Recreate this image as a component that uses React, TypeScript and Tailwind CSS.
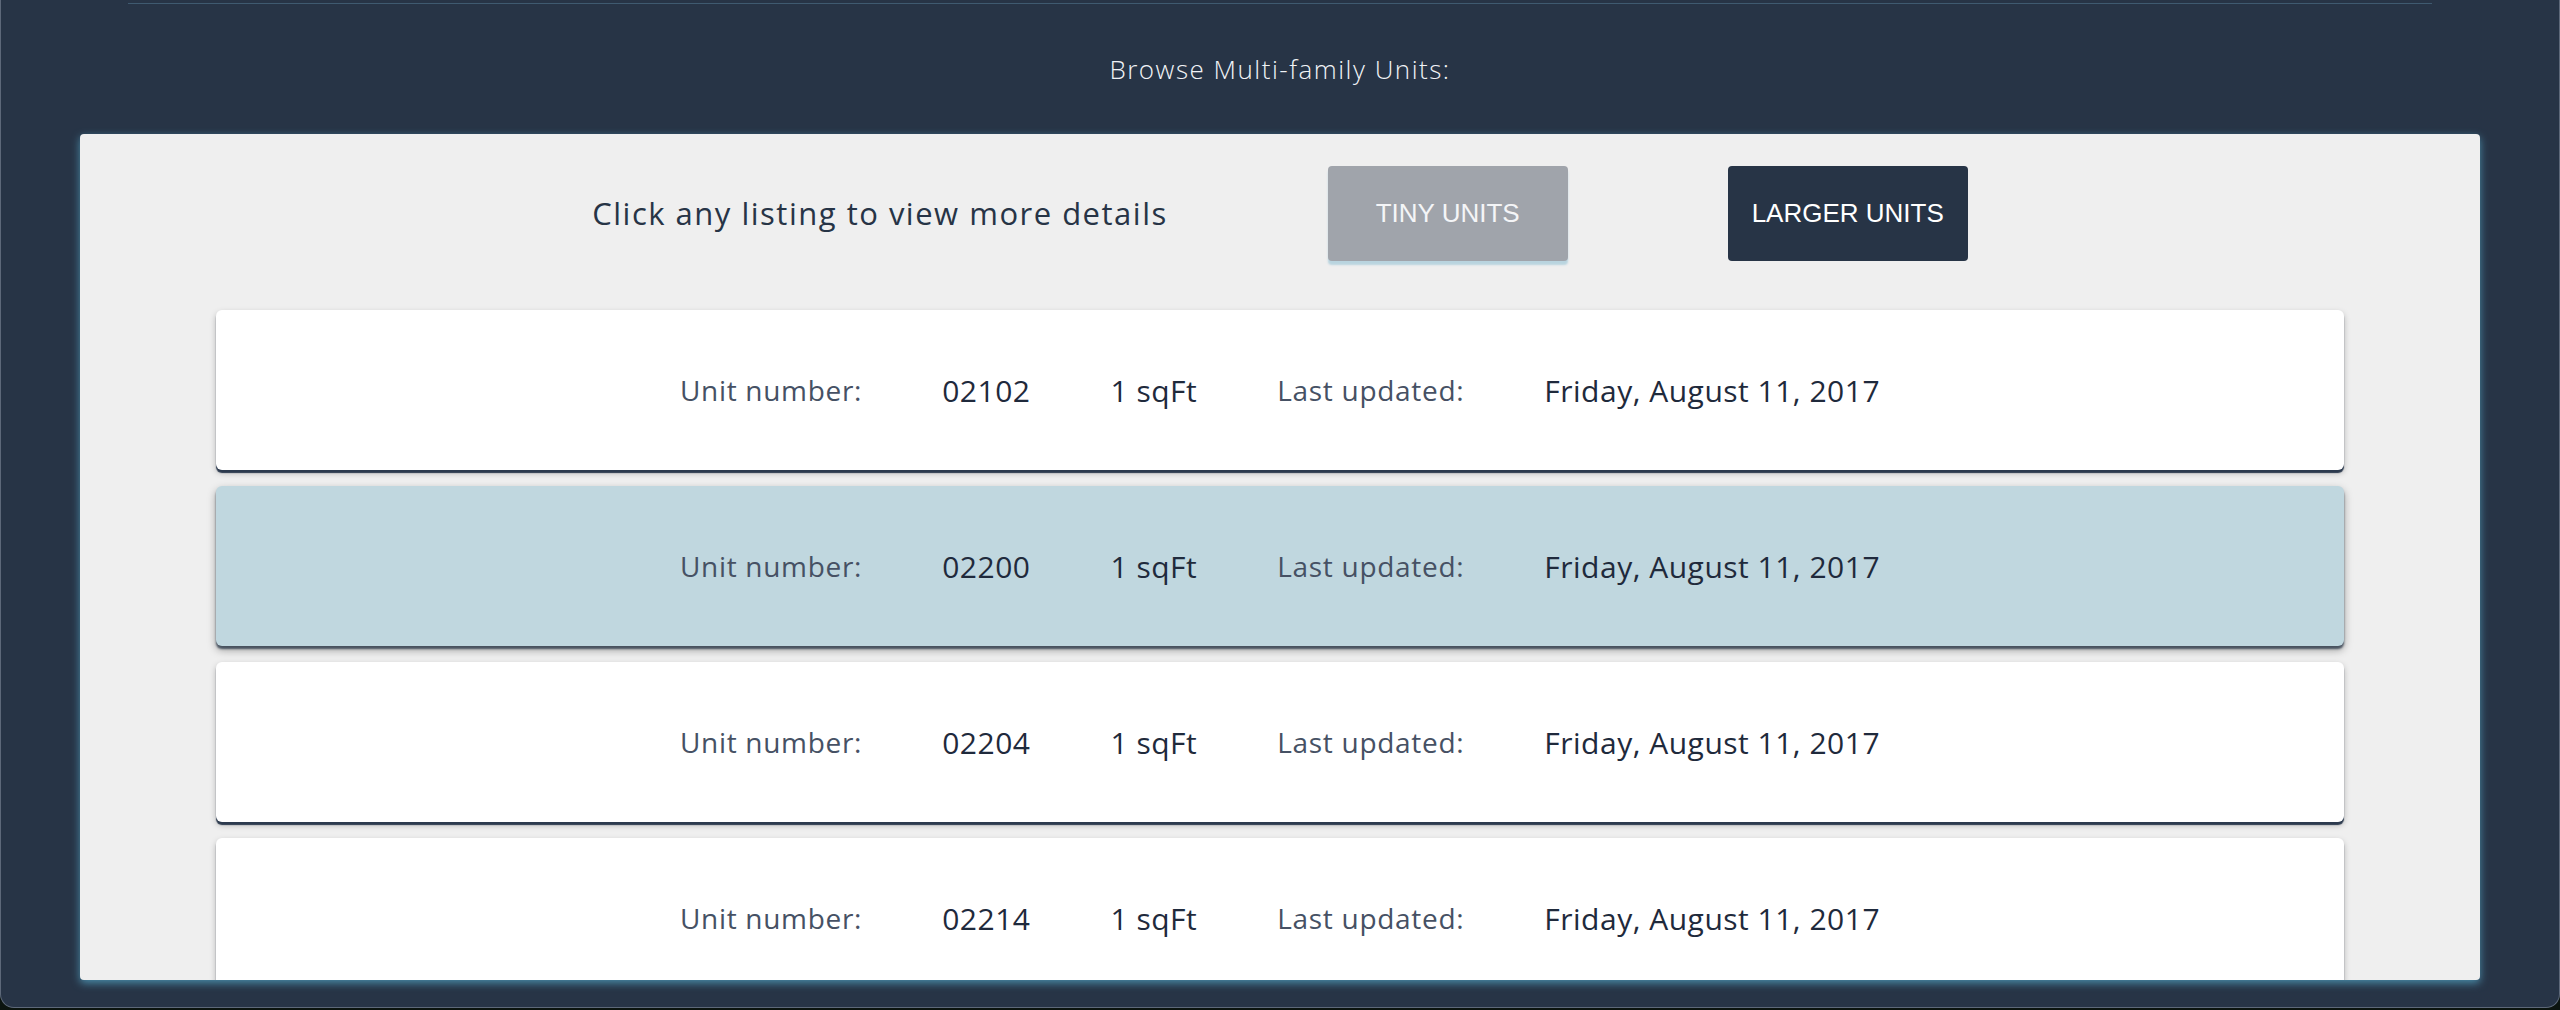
import React from "react";

const units = [
  { num: "02102", size: "1 sqFt", date: "Friday, August 11, 2017", active: false },
  { num: "02200", size: "1 sqFt", date: "Friday, August 11, 2017", active: true },
  { num: "02204", size: "1 sqFt", date: "Friday, August 11, 2017", active: false },
  { num: "02214", size: "1 sqFt", date: "Friday, August 11, 2017", active: false },
];

export default function App() {
  const font = { fontFamily: "'Open Sans', 'Noto Sans', sans-serif" };
  const btnFont = { fontFamily: "'Liberation Sans', Arial, sans-serif" };

  return (
    <div className="h-[1010px] w-full bg-[#0b140f] overflow-hidden" style={font}>
      <div className="h-[1008px] bg-[#273446] border-x border-b border-[#5d6879] rounded-b-[14px] flex flex-col px-[79px]">
        {/* top rule */}
        <div className="mt-[3px] mx-[48px] h-px bg-[#3f5a70]" />

        <h2 className="mt-[49px] text-center text-[26px] leading-[32px] tracking-[1.5px] font-light text-[#f1f3f6]">
          Browse Multi-family Units:
        </h2>

        {/* Listing panel */}
        <div className="mt-[49px] h-[846px] overflow-hidden rounded bg-[#efefef] shadow-[0_3px_9px_rgba(76,145,175,0.95)]">
          <div className="pt-[32px] flex items-center justify-center gap-[160px]">
            <p className="text-[31px] tracking-[1.5px] text-[#273446]">Click any listing to view more details</p>
            <div className="flex gap-[160px]">
              <button
                className="w-[240px] h-[95px] rounded bg-[#a0a4ab] text-[26px] text-[#f4f5f7] shadow-[0_4px_2px_#b9d4df]"
                style={btnFont}
              >
                TINY UNITS
              </button>
              <button
                className="w-[240px] h-[95px] rounded bg-[#273446] text-[26px] text-white"
                style={btnFont}
              >
                LARGER UNITS
              </button>
            </div>
          </div>

          <div className="mt-[49px] px-[136px] flex flex-col gap-[16px]">
            {units.map((u) => (
              <div
                key={u.num}
                className={
                  u.active
                    ? "h-[160px] shrink-0 rounded-md bg-[#c0d7df] flex items-center justify-center gap-[80px] shadow-[0_3px_2px_rgba(39,52,70,0.75),0_4px_9px_rgba(0,0,0,0.35)]"
                    : "h-[160px] shrink-0 rounded-md bg-white flex items-center justify-center gap-[80px] shadow-[0_3px_1px_#2c3a4e,0_3px_6px_rgba(0,0,0,0.25)]"
                }
              >
                <span className="text-[28px] tracking-[0.7px] text-[#465164]">Unit number:</span>
                <span className="text-[30px] tracking-[0.5px] text-[#1f2a3c]">{u.num}</span>
                <span className="text-[30px] tracking-[0.5px] text-[#1f2a3c]">{u.size}</span>
                <span className="text-[28px] tracking-[0.7px] text-[#465164]">Last updated:</span>
                <span className="text-[30px] tracking-[0.5px] text-[#1f2a3c]">{u.date}</span>
              </div>
            ))}
          </div>
        </div>
      </div>
    </div>
  );
}
